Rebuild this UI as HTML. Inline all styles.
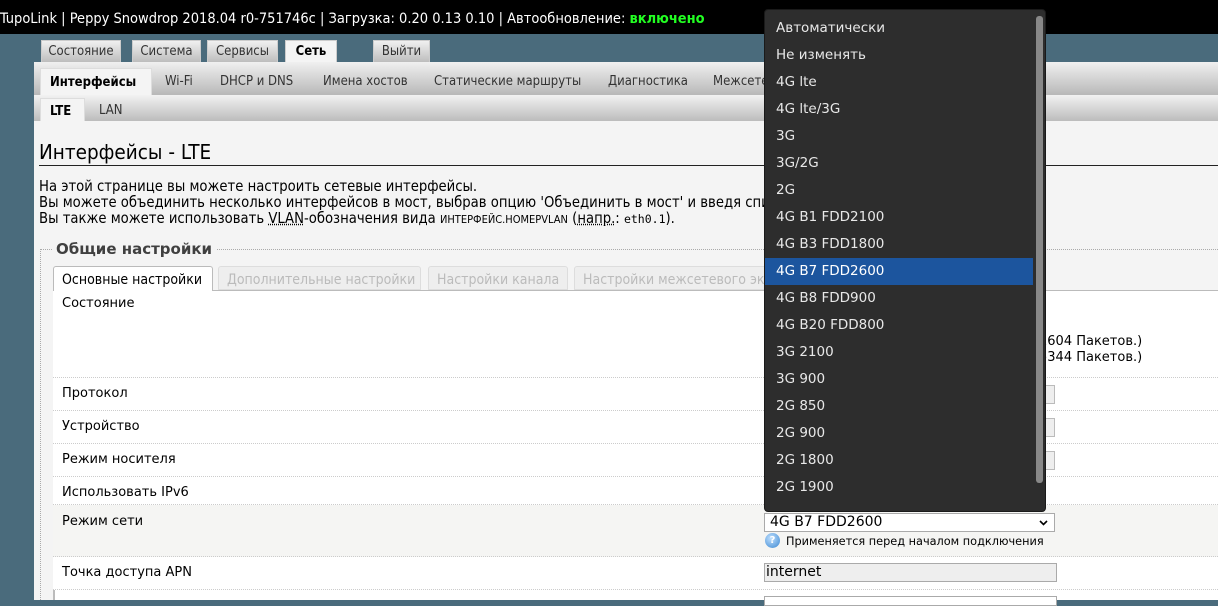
<!DOCTYPE html>
<html><head><meta charset="utf-8"><style>
*{margin:0;padding:0;box-sizing:border-box}
body{width:1218px;height:600px;overflow:hidden;background:#4a6b7c;font-family:"DejaVu Sans",sans-serif;font-size:13px;color:#000;position:relative}
.abs{position:absolute;white-space:nowrap}
.top{left:0;top:0;width:1218px;height:34px;background:#000;color:#fff;font-family:"DejaVu Sans Condensed","DejaVu Sans",sans-serif;font-size:14.5px;line-height:38px}
.top b{color:#2f2}
.tab{top:40px;height:22px;background:linear-gradient(#f0f0f0,#bdbdbd);border:1px solid #ccc;border-bottom:none;font-family:"DejaVu Sans Condensed",sans-serif;font-size:13px;color:#333;line-height:22px;text-align:center}
.main{left:34px;top:62px;width:1184px;height:538px;background:#f4f4f4}
.sub{left:34px;top:62px;width:1184px;height:33px;background:linear-gradient(#f0f0f0,#b8b8b8);font-family:"DejaVu Sans Condensed",sans-serif;color:#333}
.sub span{position:absolute;top:12px}
.lte{left:34px;top:95px;width:1184px;height:26px;background:linear-gradient(#f2f2f2,#bcbcbc);font-family:"DejaVu Sans Condensed",sans-serif;color:#333}
.cond{font-family:"DejaVu Sans Condensed",sans-serif}
.row{left:53px;width:1165px;border-bottom:1px dotted #ccc;background:#fff}
.row span{position:absolute;left:9px;top:8px}
.ftab{top:266px;height:24px;border-radius:3px 3px 0 0;padding:5px 8px;font-family:"DejaVu Sans Condensed",sans-serif;font-size:14px;overflow:hidden}
.dd{left:764px;top:9px;width:282px;height:503px;background:#2d2d2d;border-radius:4px;border:1px solid #1a1a1a;color:#e8e8e8;font-family:"DejaVu Sans",sans-serif;font-size:13.5px}
.dd div{position:absolute;left:11px;height:27px;line-height:27px}
</style></head><body>
<div class="abs top">TupoLink | Peppy Snowdrop 2018.04 r0-751746c | Загрузка: 0.20 0.13 0.10 | Автообновление: <b>включено</b></div>
<div class="abs tab" style="left:41px;width:80px">Состояние</div>
<div class="abs tab" style="left:132px;width:69px">Система</div>
<div class="abs tab" style="left:207px;width:71px">Сервисы</div>
<div class="abs tab" style="left:285px;width:52px;background:#f4f4f4;color:#000;font-weight:bold">Сеть</div>
<div class="abs tab" style="left:373px;width:57px">Выйти</div>
<div class="abs main"></div>
<div class="abs sub">
<span style="left:6px;top:6px;height:27px;width:112px;background:#f4f4f4;padding:6px 0 0 9px;font-weight:bold;color:#000;border:1px solid #ddd;border-bottom:none">Интерфейсы</span>
<span style="left:131px">Wi-Fi</span><span style="left:186px">DHCP и DNS</span><span style="left:289px">Имена хостов</span><span style="left:400px">Статические маршруты</span><span style="left:574px">Диагностика</span><span style="left:679px">Межсетевой экран</span></div>
<div class="abs lte"><span style="position:absolute;left:6px;top:3px;height:23px;width:45px;background:#f4f4f4;padding:5px 0 0 9px;font-weight:bold;color:#000;border:1px solid #ddd;border-bottom:none">LTE</span><span style="position:absolute;left:65px;top:8px">LAN</span></div>
<div class="abs cond" style="left:39px;top:140px;font-size:20.5px;width:1179px;border-bottom:1px solid #222;padding-bottom:1px">Интерфейсы - LTE</div>
<div class="abs cond" style="left:39px;top:179px;font-size:14.7px;line-height:16px">На этой странице вы можете настроить сетевые интерфейсы.<br>Вы можете объединить несколько интерфейсов в мост, выбрав опцию 'Объединить в мост' и введя список интерфейсов<br>Вы также можете использовать <u style="text-decoration-style:dotted">VLAN</u>-обозначения вида <span style="font-size:11px">ИНТЕРФЕЙС.HOMEPVLAN</span> (<u style="text-decoration-style:dotted">напр.</u>: <span style="font-family:'DejaVu Sans Mono';font-size:11.5px">eth0.1</span>).</div>
<div class="abs" style="left:40px;top:249px;width:1178px;height:351px;border-left:1px dotted #aaa;border-top:1px dotted #aaa"></div>
<div class="abs" style="left:52px;top:240px;background:#f4f4f4;padding:0 4px;font-weight:bold;font-size:15px;color:#404040">Общие настройки</div>
<div class="abs ftab" style="left:53px;width:160px;height:25px;background:#fff;border:1px solid #bbb;border-bottom:none">Основные настройки</div>
<div class="abs ftab" style="left:218px;width:203px;background:#eee;border:1px solid #ddd;color:#bbb">Дополнительные настройки</div>
<div class="abs ftab" style="left:428px;width:140px;background:#eee;border:1px solid #ddd;color:#bbb">Настройки канала</div>
<div class="abs ftab" style="left:574px;width:200px;background:#eee;border:1px solid #ddd;color:#bbb">Настройки межсетевого экрана</div>
<div class="abs" style="left:213px;top:290px;width:1005px;border-top:1px solid #bbb"></div>
<div class="abs" style="left:53px;top:291px;width:1165px;height:309px;background:#fff;border-left:2px solid #bbb"></div>
<div class="abs row" style="top:291px;height:87px"><span style="top:5px">Состояние</span></div>
<div class="abs row" style="top:378px;height:33px"><span>Протокол</span></div>
<div class="abs row" style="top:411px;height:33px"><span>Устройство</span></div>
<div class="abs row" style="top:444px;height:33px"><span>Режим носителя</span></div>
<div class="abs row" style="top:477px;height:28px"><span>Использовать IPv6</span></div>
<div class="abs row" style="top:505px;height:52px;background:#f5f5f3"><span style="top:9px">Режим сети</span></div>
<div class="abs row" style="top:557px;height:33px"><span>Точка доступа APN</span></div>
<div class="abs" style="left:1039px;top:334px;font-size:13px;line-height:16px">1604 Пакетов.)<br>5344 Пакетов.)</div>
<div class="abs" style="left:1030px;top:385px;width:25px;height:19px;border:1px solid #bbb;background:#eee"></div>
<div class="abs" style="left:1030px;top:418px;width:25px;height:19px;border:1px solid #bbb;background:#eee"></div>
<div class="abs" style="left:1030px;top:451px;width:25px;height:19px;border:1px solid #bbb;background:#eee"></div>
<div class="abs" style="left:764px;top:513px;width:291px;height:19px;border:1px solid #aaa;background:#fff;padding-left:5px;font-size:14px;line-height:17px">4G B7 FDD2600<svg style="position:absolute;right:6px;top:6px" width="9" height="6" viewBox="0 0 9 6"><path d="M1 1l3.5 3.5L8 1" stroke="#000" stroke-width="1.6" fill="none"/></svg></div>
<div class="abs" style="left:765px;top:533px;width:15px;height:15px;border-radius:50%;background:radial-gradient(circle at 40% 35%,#bfe0ff,#3a86d0);color:#fff;font-size:10px;font-weight:bold;text-align:center;line-height:15px">?</div>
<div class="abs" style="left:786px;top:535px;font-size:11.3px">Применяется перед началом подключения</div>
<div class="abs" style="left:764px;top:563px;width:293px;height:19px;border:1px solid #aaa;background:#eee;font-size:14px;line-height:17px;padding-left:1px">internet</div>
<div class="abs" style="left:764px;top:596px;width:293px;height:10px;border:1px solid #aaa;background:#fff"></div>
<div class="abs dd">
<div style="top:5px">Автоматически</div><div style="top:32px">Не изменять</div><div style="top:59px">4G lte</div><div style="top:86px">4G lte/3G</div><div style="top:113px">3G</div><div style="top:140px">3G/2G</div><div style="top:167px">2G</div><div style="top:194px">4G B1 FDD2100</div><div style="top:221px">4G B3 FDD1800</div>
<div style="top:248px;left:0;width:268px;background:#1c559e;padding-left:11px;color:#fff">4G B7 FDD2600</div>
<div style="top:275px">4G B8 FDD900</div><div style="top:302px">4G B20 FDD800</div><div style="top:329px">3G 2100</div><div style="top:356px">3G 900</div><div style="top:383px">2G 850</div><div style="top:410px">2G 900</div><div style="top:437px">2G 1800</div><div style="top:464px">2G 1900</div>
<div style="left:271px;top:6px;width:7px;height:467px;background:#888;border-radius:3px"></div>
</div>
</body></html>
